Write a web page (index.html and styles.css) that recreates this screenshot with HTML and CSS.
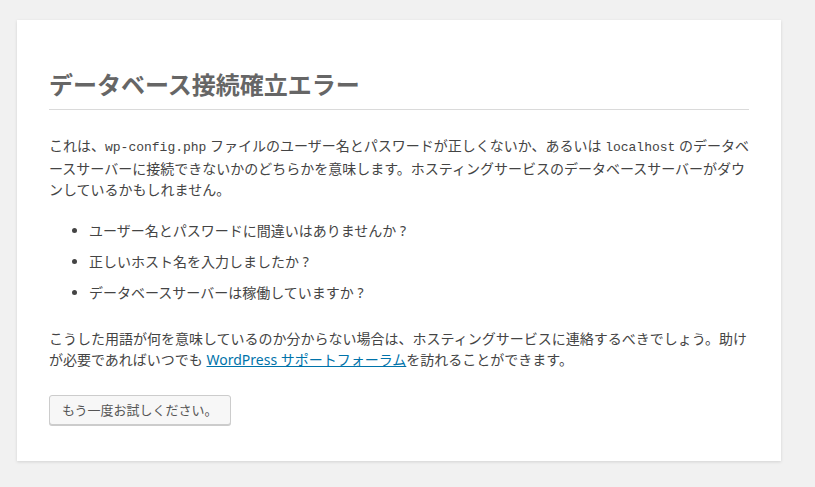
FILE: index.html
```html
<!DOCTYPE html>
<html lang="ja">
<head>
    <meta charset="UTF-8">
    <meta name="viewport" content="width=device-width, initial-scale=1.0">
    <title>WordPress &rsaquo; エラー</title>
    <link rel="stylesheet" href="styles.css">
</head>
<body id="error-page">
    <div class="wp-die-message">
        <h1>データベース接続確立エラー</h1>
        <p>これは、<code>wp-config.php</code> ファイルのユーザー名とパスワードが正しくないか、あるいは <code>localhost</code> のデータベースサーバーに接続できないかのどちらかを意味します。ホスティングサービスのデータベースサーバーがダウンしているかもしれません。</p>
        <ul>
            <li>ユーザー名とパスワードに間違いはありませんか ?</li>
            <li>正しいホスト名を入力しましたか ?</li>
            <li>データベースサーバーは稼働していますか ?</li>
        </ul>
        <p>こうした用語が何を意味しているのか分からない場合は、ホスティングサービスに連絡するべきでしょう。助けが必要であればいつでも <a href="#">WordPress サポートフォーラム</a>を訪れることができます。</p>
        <p><a href="#" class="button button-large">もう一度お試しください。</a></p>
    </div>
</body>
</html>
```

FILE: styles.css
```css
html {
    background: #f1f1f1;
}
body {
    background: #fff;
    color: #444;
    font-family: "Noto Sans", "Noto Sans CJK JP", sans-serif;
    font-size: 14px;
    margin: 20px 0 0 17px;
    padding: 14px 32px 16px;
    max-width: 700px;
    box-shadow: 0 1px 3px rgba(0, 0, 0, 0.13);
}
h1 {
    border-bottom: 1px solid #dadada;
    clear: both;
    color: #666;
    font-size: 24px;
    line-height: 34px;
    margin: 34px 0 0 0;
    padding: 0 0 7px;
}
p {
    font-size: 14px;
    line-height: 1.5;
    margin: 25px 0 20px;
}
code {
    font-family: "Liberation Mono", monospace;
    font-size: 13px;
}
ul {
    margin: 14px 0;
    padding-left: 40px;
}
ul li {
    margin-bottom: 10px;
    font-size: 14px;
    line-height: 1.5;
}
a {
    color: #0073aa;
}
.button {
    display: inline-block;
    background: #f7f7f7;
    border: 1px solid #ccc;
    color: #555;
    border-radius: 3px;
    box-shadow: 0 1px 0 #ccc;
    font-size: 13px;
    height: 30px;
    line-height: 28px;
    padding: 0 12px 2px;
    box-sizing: border-box;
    text-decoration: none;
    vertical-align: top;
    white-space: nowrap;
}
.button-large {
    height: 30px;
}
```
